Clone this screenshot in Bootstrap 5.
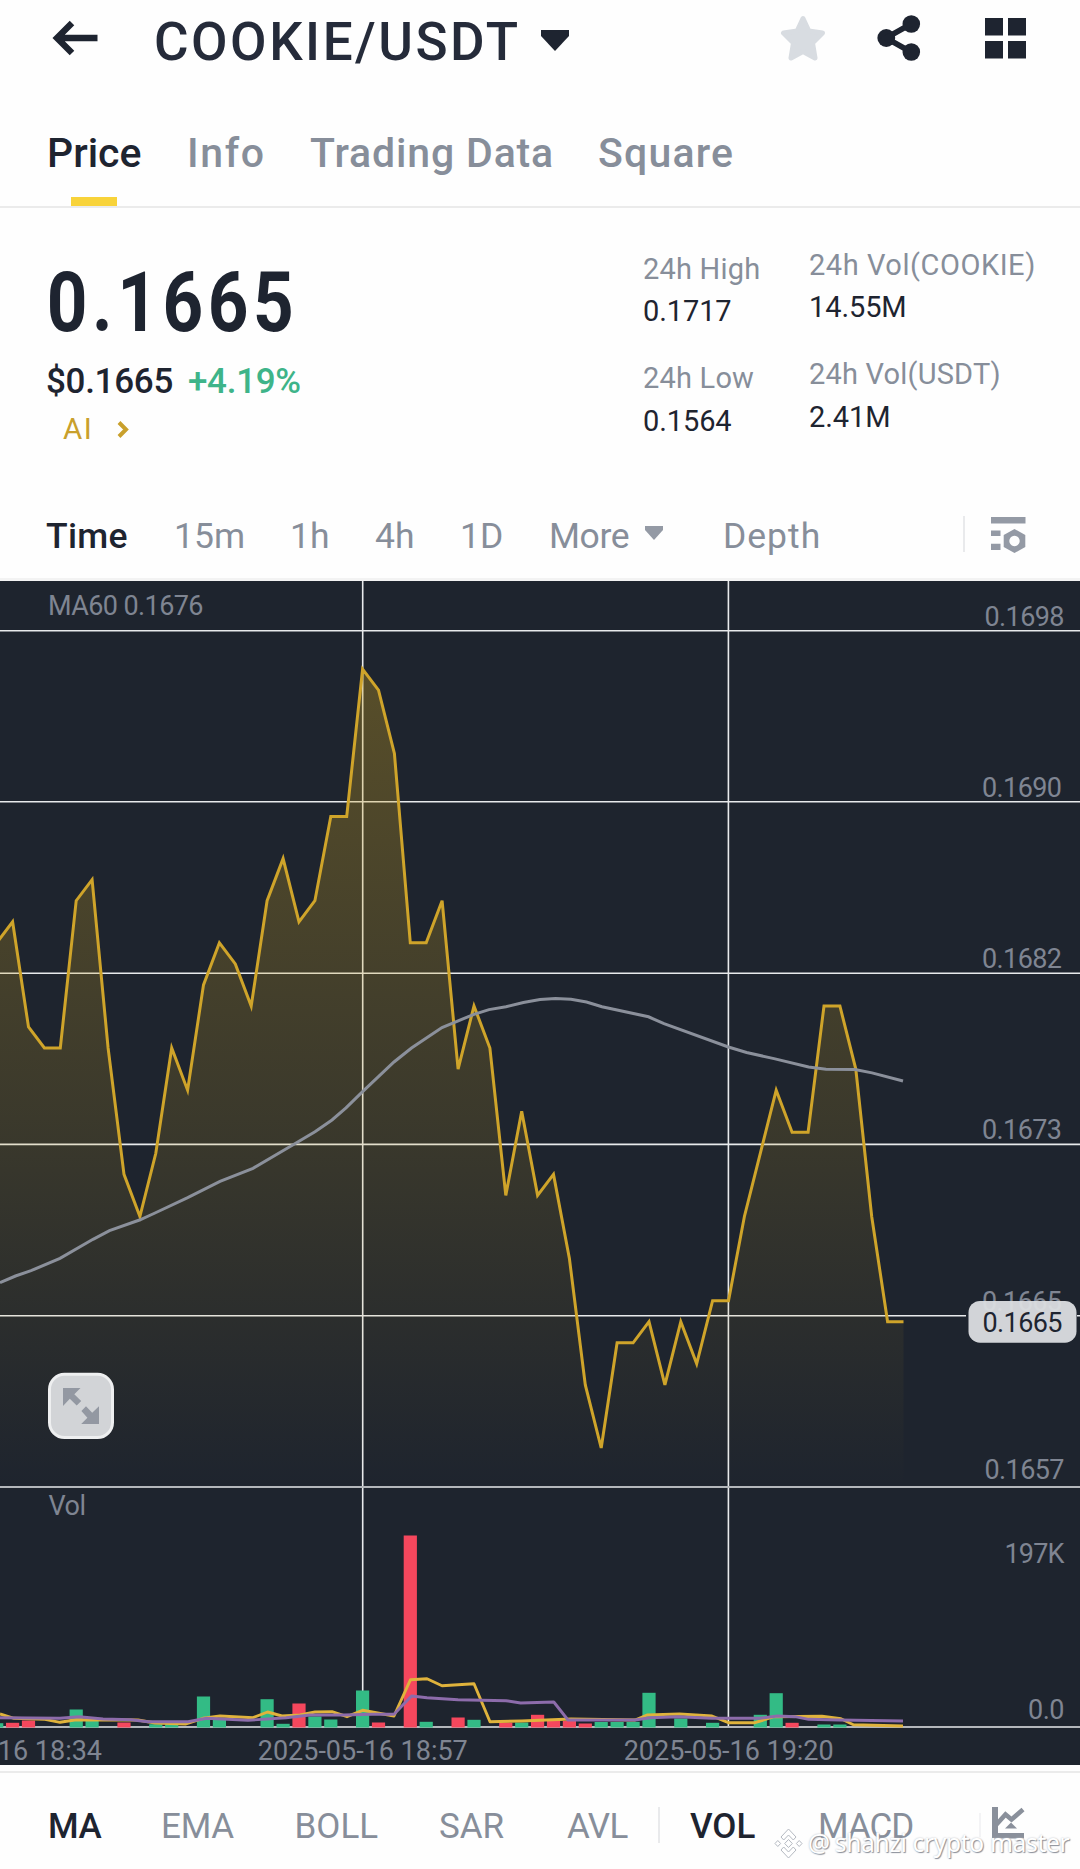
<!DOCTYPE html>
<html lang="en">
<head>
<meta charset="utf-8">
<meta name="viewport" content="width=device-width, initial-scale=1">
<title>COOKIE/USDT</title>
<link href="https://cdn.jsdelivr.net/npm/bootstrap@5.3.0/dist/css/bootstrap.min.css" rel="stylesheet">
<style>
  :root { --ink:#1e2430; --dim:#878e9a; --gold:#c9a02c; --up:#3eb489; }
  body { font-family: Roboto, "Noto Sans", sans-serif; color: var(--ink); background:#fefefe; width:1080px; height:1869px; overflow:hidden; }
  svg { display:block; flex:none; }
  .topbar { height:80px; padding:0 54px 0 52px; }
  .back-icon { margin-bottom:4px; }
  .pair { font-size:53px; font-weight:500; line-height:80px; padding-top:2px; height:80px; letter-spacing:2.5px; margin-left:54px; width:387px; white-space:nowrap; color:#252b3a; }
  .icons { margin-bottom:4px; }
  .gap-share { margin-left:51px; }
  .gap-grid { margin-left:64px; }
  .tabs { height:128px; padding:20px 0 0 47px; border-bottom:2px solid #ebebeb; font-size:41px; font-weight:500; line-height:107px; color:var(--dim); white-space:nowrap; }
  .tabs a, .frames a, .indicators a { color:inherit; text-decoration:none; flex:none; }
  .tabs .on, .frames .on, .indicators .on { color:var(--ink); font-weight:500; }
  .tabs .on { position:relative; }
  .tabs .on::after { content:""; position:absolute; left:24px; bottom:0; width:46px; height:9px; background:#f8d33a; }
  .t1 { width:140px; } .t2 { width:123px; letter-spacing:1.6px; } .t3 { width:288px; letter-spacing:.85px; } .t4 { letter-spacing:1.2px; }
  .quote { height:284px; }
  .q-left { width:643px; padding:52px 0 0 46px; }
  .last { font-size:82.5px; font-weight:700; line-height:86px; transform:scaleX(.86); transform-origin:0 50%; letter-spacing:5.3px; white-space:nowrap; padding-left:1px; }
  .fiat { font-size:35px; font-weight:500; line-height:42px; margin-top:15px; gap:15px; letter-spacing:-.3px; }
  .up { color:var(--up); }
  .tagline { font-size:29.5px; line-height:36px; margin-top:8px; padding-left:17px; color:var(--gold); letter-spacing:1.6px; gap:24px; }
  .stats { font-size:29px; line-height:36px; white-space:nowrap; }
  .stats dt { font-weight:400; color:var(--dim); letter-spacing:.2px; }
  .stats dd { margin:6px 0 31px; font-weight:400; letter-spacing:-.1px; }
  .stats dd + dt + dd { margin-top:7px; }
  .s1 { width:166px; padding-top:43px; }
  .s2 { padding-top:39px; }
  .s2 dt:first-child { letter-spacing:.55px; }
  .frames { height:89px; border-bottom:3px solid #f3f3f3; padding:1px 0 0 46px; font-size:35.5px; color:var(--dim); white-space:nowrap; line-height:86px; }
  .f1 { width:128px; letter-spacing:.3px; } .f2 { width:116px; } .f3, .f4 { width:85px; } .f5 { width:89px; } .f6 { width:96px; letter-spacing:-.4px; } .f7 { width:240px; letter-spacing:1px; }
  .more-caret { margin:0 60px 5px 0; }
  .tune-icon { margin:0 0 2px 25px; }
  .vr-line { width:2px; height:36px; background:#e9eaec; flex:none; margin-bottom:4px; }
  .vr-faint { opacity:.55; height:24px; }
  .indicators { margin-top:6px; border-top:2px solid #ebebeb; height:98px; padding:11px 0 0 48px; font-size:35px; line-height:87px; color:var(--dim); white-space:nowrap; }
  .i1 { width:113px; letter-spacing:-.4px; } .i2 { width:133.5px; letter-spacing:-.2px; } .i3 { width:144.5px; } .i4 { width:128px; } .i5 { width:91px; letter-spacing:-.6px; } .i6 { width:128px; margin-left:30px; } .i7 { width:160.5px; letter-spacing:-1px; }
  .chart-icon { margin:0 0 7px 11px; }
  .chart text { font-family: Roboto, "Noto Sans", sans-serif; font-size:27px; fill:#7f8592; }
  .chart .now { fill:#1e2430; }
  .stamp { position:absolute; left:774px; top:1825px; gap:5px; height:36px; font:24.6px/36px "Noto Sans","Noto Sans CJK SC",sans-serif; color:#fff; text-shadow:1px 1px 1px #8a8f99, 0 0 2px #b9bdc4; white-space:nowrap; }
  .stamp span { letter-spacing:-.35px; }
</style>
</head>
<body class="position-relative">
<header class="topbar d-flex align-items-center">
  <svg class="back-icon" width="48" height="38" viewBox="52 19 48 38"><path d="M97.5 38H58M72 23L57 38L72 53" fill="none" stroke="#1e2430" stroke-width="6.4"/></svg>
  <div class="pair">COOKIE/USDT</div>
  <svg width="28" height="21" viewBox="0 0 28 21"><path d="M0 0H28V6L14 21L0 6Z" fill="#1e2430"/></svg>
  <div class="icons d-flex align-items-center ms-auto">
    <svg width="46" height="46" viewBox="780 15 46 46"><path d="M803 18.5L808.8 31L822.5 33L812.5 43L815 58L803 51.5L791 58L793.5 43L783.5 33L797.2 31Z" fill="#d8dce1" stroke="#d8dce1" stroke-width="5" stroke-linejoin="round"/></svg>
    <svg class="gap-share" width="44" height="46" viewBox="877 15 44 46"><g fill="#1e2430"><circle cx="911.3" cy="24" r="8.8"/><circle cx="886.3" cy="38" r="8.9"/><circle cx="911.3" cy="52" r="8.8"/></g><path d="M911 24L886 38L911 52" fill="none" stroke="#1e2430" stroke-width="5.6"/></svg>
    <svg class="gap-grid" width="41" height="41" viewBox="0 0 41 41"><path d="M0 0H18V17.5H0ZM23 0H41V17.5H23ZM0 23H18V40.5H0ZM23 23H41V40.5H23Z" fill="#1e2430"/></svg>
  </div>
</header>
<nav class="tabs d-flex">
  <a href="#" class="on t1">Price</a>
  <a href="#" class="t2">Info</a>
  <a href="#" class="t3">Trading Data</a>
  <a href="#" class="t4">Square</a>
</nav>
<section class="quote d-flex">
  <div class="q-left">
    <div class="last">0.1665</div>
    <div class="fiat d-flex"><span>$0.1665</span><span class="up">+4.19%</span></div>
    <div class="tagline d-flex align-items-center"><span>AI</span><svg width="12" height="17" viewBox="0 0 12 17"><path d="M2 1.5L9 8.5L2 15.5" fill="none" stroke="#c9a02c" stroke-width="4"/></svg></div>
  </div>
  <dl class="stats s1 mb-0"><dt>24h High</dt><dd>0.1717</dd><dt>24h Low</dt><dd>0.1564</dd></dl>
  <dl class="stats s2 mb-0"><dt>24h Vol(COOKIE)</dt><dd>14.55M</dd><dt>24h Vol(USDT)</dt><dd>2.41M</dd></dl>
</section>
<nav class="frames d-flex align-items-center">
  <a href="#" class="on f1">Time</a>
  <a href="#" class="f2">15m</a>
  <a href="#" class="f3">1h</a>
  <a href="#" class="f4">4h</a>
  <a href="#" class="f5">1D</a>
  <a href="#" class="f6">More</a>
  <svg class="more-caret" width="18" height="14" viewBox="0 0 18 14"><path d="M0 0H18V4L9 14L0 4Z" fill="#949aa5"/></svg>
  <a href="#" class="f7">Depth</a>
  <div class="vr-line"></div>
  <svg class="tune-icon" width="36" height="38" viewBox="990 515 36 38"><g fill="#949aa5"><path d="M991 516H1025.5V522.5H991ZM991 529.5H1000.5V535H991ZM991 542.7H1000.5V549H991Z"/><path fill-rule="evenodd" d="M1014.5 528L1025.3 534V546L1014.5 552L1003.7 546V534ZM1014.5 534.8a5.2 5.2 0 1 0 .01 0Z"/></g></svg>
</nav>
<main class="chart">
  <svg id="plot" width="1080" height="1184" viewBox="0 581 1080 1184">
    <defs><linearGradient id="fade" gradientUnits="userSpaceOnUse" x1="0" y1="667" x2="0" y2="1487"><stop offset="0" stop-color="#c9a020" stop-opacity=".34"/><stop offset=".55" stop-color="#c9a020" stop-opacity=".17"/><stop offset="1" stop-color="#c9a020" stop-opacity="0"/></linearGradient></defs>
    <rect y="581" width="1080" height="1184" fill="#1e242e"/>
    <path d="M0 630.7H1080M0 801.8H1080M0 973.2H1080M0 1144.4H1080M0 1315.8H966M1077 1315.8H1080M362.7 581V1727M728.4 581V1727" stroke="#e8eaec" stroke-width="1.6"/>
    <path d="M0 1487H1080M0 1727H1080" stroke="#b4b7bb" stroke-width="2"/>
    <path id="area" fill="url(#fade)"/>
    <path id="price" fill="none" stroke="#cfa42a" stroke-width="3"/>
    <polyline fill="none" stroke="#8b909b" stroke-width="3" points="0,1282.7 15.5,1276 31,1270.7 60,1258.3 93,1239.3 109.5,1230.7 139.5,1220 155,1213 187.7,1197.7 220,1181.3 253,1168.3 292.7,1145 315,1131.7 332,1120 346,1107.8 362.6,1091.7 394,1062 411.5,1048 442,1027.5 474,1014.3 489,1009.6 506,1006.8 523.4,1002.5 540,999.6 555.5,998.6 571,999.3 586.5,1002 602,1006.8 648.5,1016.8 664,1023.6 728.4,1047 746.6,1052.5 774,1058.6 808.6,1067 826,1069.3 855,1069.6 872,1072.9 903,1081"/>
    <g id="bars"></g>
    <g fill="none" stroke-width="2.9" stroke-linejoin="round">
      <polyline stroke="#e0b33c" points="0,1714 14,1718.3 45,1719.3 60,1722.3 76.4,1719.7 138,1720 155,1723 186,1724 203,1718.3 220,1716 253,1717.7 267.6,1712 282,1716 300,1715 315,1712 332,1711.7 347,1716.7 362.6,1710.3 394,1716 410.5,1679.7 427,1678.7 442,1685.7 474,1683.7 490,1721.7 521.7,1721 540,1720.3 571,1719 635,1720 647,1715 679.5,1714 712,1716 728.4,1722.7 755,1722.7 774,1716.7 822,1716.3 841,1718.7 853.4,1724.7 903,1726"/>
      <polyline stroke="#8d6cab" points="0,1717.7 60,1718.3 79,1716.7 103,1719 131,1719.7 148,1721.7 188,1721.7 206.6,1718.3 248,1720.3 286,1717.7 310,1715 344,1715 372,1714.3 394,1714.3 411.5,1696 427,1697.7 458,1699.7 506,1700.7 520.7,1703 553.8,1702 568,1720 635,1720 650,1717.7 678,1716.7 712,1718.3 760,1718.3 777.6,1716 795,1716.7 808.6,1719.3 839.6,1720 903,1721"/>
    </g>
    <text x="48" y="614.8" textLength="155.5">MA60 0.1676</text>
    <text x="48.5" y="1514.5" textLength="37.5">Vol</text>
    <text x="984.5" y="625.5" textLength="80">0.1698</text>
    <text x="982" y="796.5" textLength="80">0.1690</text>
    <text x="982" y="967.5" textLength="80">0.1682</text>
    <text x="982" y="1138.5" textLength="80">0.1673</text>
    <text x="982" y="1310.5" textLength="80">0.1665</text>
    <text x="984.5" y="1478.5" textLength="80">0.1657</text>
    <text x="1004.5" y="1562.5" textLength="60">197K</text>
    <text x="1028" y="1718.5" textLength="36.5">0.0</text>
    <text x="-108" y="1760.3" textLength="210">2025-05-16 18:34</text>
    <text x="257.8" y="1760.3" textLength="210">2025-05-16 18:57</text>
    <text x="623.7" y="1760.3" textLength="210">2025-05-16 19:20</text>
    <rect x="968.5" y="1301" width="108" height="41.7" rx="11.5" fill="#dcdee1" fill-opacity=".95"/>
    <text class="now" x="982.5" y="1332.3" textLength="80">0.1665</text>
    <rect x="49.5" y="1374.3" width="63" height="63.2" rx="15" fill="#d2d4d7" stroke="#eeeff0" stroke-width="3"/>
    <path d="M63 1388H80.5L74.3 1394.2L81.2 1401L76.7 1405.5L69.8 1398.8L63 1406ZM99 1424H81.2L87.4 1417.8L81.4 1411L86 1406.3L92.2 1412.8L99 1406.3Z" fill="#9398a2"/>
  </svg>
</main>
<nav class="indicators d-flex align-items-center">
  <a href="#" class="on i1">MA</a>
  <a href="#" class="i2">EMA</a>
  <a href="#" class="i3">BOLL</a>
  <a href="#" class="i4">SAR</a>
  <a href="#" class="i5">AVL</a>
  <div class="vr-line"></div>
  <a href="#" class="on i6">VOL</a>
  <a href="#" class="i7">MACD</a>
  <div class="vr-line vr-faint"></div>
  <svg class="chart-icon" width="33" height="32" viewBox="0 0 33 32"><path d="M0 0H6V26H32V31.5H0Z" fill="#8a909b"/><path d="M4 18L13.5 7.5L19.5 12.5L31 2.5" fill="none" stroke="#8a909b" stroke-width="4.6"/><path d="M19 15.5L25 21.5H13Z" fill="#8a909b"/></svg>
</nav>
<div class="stamp d-flex align-items-center">
  <svg width="29" height="31" viewBox="0 0 29 31"><g fill="#fff" stroke="#b4b9c1" stroke-width="1"><path d="M14.5 1L22 9L19.3 12L14.5 7L9.7 12L7 9Z"/><path d="M14.5 30L22 22L19.3 19L14.5 24L9.7 19L7 22Z"/><path d="M14.5 11.5L18.3 15.5L14.5 19.5L10.7 15.5Z"/><path d="M3.8 12.5L6.6 15.5L3.8 18.5L1 15.5ZM25.2 12.5L28 15.5L25.2 18.5L22.4 15.5Z"/></g></svg>
  <span>@</span><span>shahzi crypto master</span>
</div>
<script src="https://cdn.jsdelivr.net/npm/bootstrap@5.3.0/dist/js/bootstrap.bundle.min.js"></script>
<script>
  // One point per minute; values are ticks of 0.0001 relative to the last price.
  const x = k => 362.6 + 15.909 * k, y = n => 1321.7 - 21.05 * n;
  const ticks = [18,19,14,13,13,20,21,13,7,5,8,13,11,16,18,17,15,20,22,19,20,24,24,31,30,27,18,18,20,12,15,13,6,10,6,7,3,-3,-6,-1,-1,0,-3,0,-2,1,1,5,8,11,9,9,15,15,12,5,0,0];
  const line = 'M' + ticks.map((n, i) => x(i - 23).toFixed(1) + ' ' + y(n).toFixed(1)).join('L');
  document.getElementById('price').setAttribute('d', line);
  document.getElementById('area').setAttribute('d', line + 'V1487H-4Z');
  // Volume bars: [minute, height, rising]
  const vol = [[-23,4.3,1],[-22,4.7,0],[-21,7,0],[-18,18,1],[-17,7,1],[-15,5,0],[-13,3.3,1],[-12,6,1],[-10,31,1],[-9,9,1],[-6,28.3,1],[-5,3.7,1],[-4,24,0],[-3,11,1],[-2,8,1],[0,37,1],[1,5,0],[3,192,0],[4,5.7,1],[6,10,0],[7,7.7,1],[9,5,0],[10,5,1],[11,12.7,0],[12,7,0],[13,6.5,0],[14,4,0],[15,5.5,1],[16,5.5,1],[17,5.7,1],[18,34.7,1],[20,9,1],[22,4.7,1],[25,12.7,1],[26,34.3,1],[27,4.7,0],[29,3,1],[30,3,1]];
  document.getElementById('bars').innerHTML = vol.map(([k, h, up]) => `<rect x="${(x(k) - 6.6).toFixed(1)}" y="${1727.5 - h}" width="13.2" height="${h}" fill="${up ? '#33bb85' : '#f5475d'}"/>`).join('');
</script>
</body>
</html>
